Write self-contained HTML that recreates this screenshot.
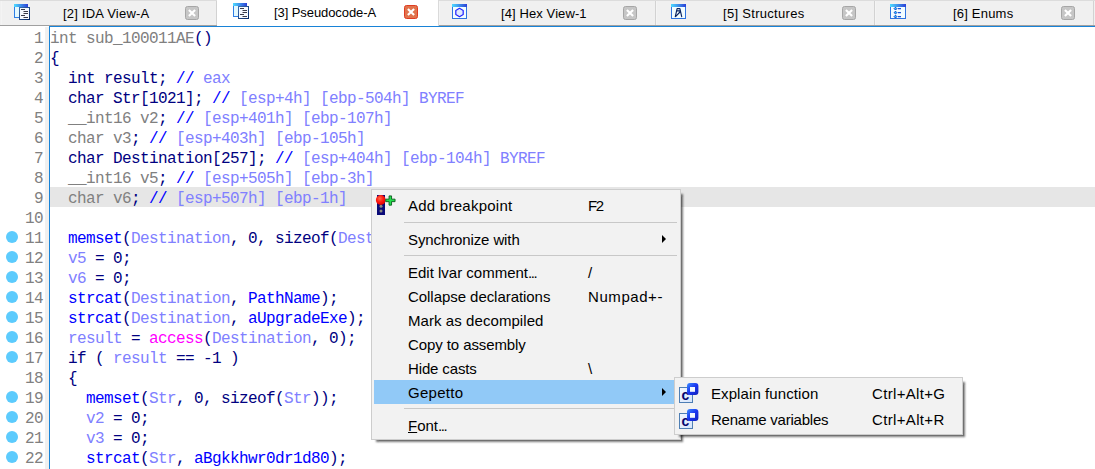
<!DOCTYPE html>
<html>
<head>
<meta charset="utf-8">
<title>IDA Pseudocode</title>
<style>
html,body{margin:0;padding:0;}
body{width:1095px;height:469px;overflow:hidden;background:#fff;position:relative;font-family:"Liberation Sans",sans-serif;}
#tabs{position:absolute;left:0;top:0;width:1095px;height:27px;background:#f0f0f0;}
#tabs .topline{position:absolute;left:0;top:0;width:1095px;height:1px;background:#dcdcdc;}
#tabs .grayline{position:absolute;left:0;top:25px;width:1095px;height:1px;background:#a0a0a0;}
#tabs .blueline{position:absolute;left:49px;top:26px;width:1046px;height:1px;background:#1883d7;}
#tabs .whiteline{position:absolute;left:0;top:26px;width:49px;height:1px;background:#fff;}
.tab{position:absolute;top:1px;height:24px;border-left:1px solid #f4f4f4;border-right:1px solid #d2d2d2;box-sizing:border-box;font-size:13px;color:#000;}
.tab.active{background:#fff;top:0;height:26px;border-left:1px solid #fff;border-right:1px solid #dadada;}
.tab .ico{position:absolute;top:3px;}
.tab .lbl{position:absolute;top:5px;white-space:nowrap;line-height:16px;letter-spacing:0.2px;}
.tab.active .lbl{top:5px;}
.tab .cls{position:absolute;top:5px;width:14px;height:14px;box-sizing:border-box;border:1px solid #a6a6a6;border-radius:2.5px;background:#c6c6c6;}
.tab.active .cls{background:#e1734c;border-color:#df3c22;}
#gutterstrip{position:absolute;left:45px;top:27px;width:4px;height:442px;background:#f0f0f0;}
#bluev{position:absolute;left:49px;top:26px;width:1px;height:443px;background:#1883d7;}
.ln{position:absolute;left:0;width:1095px;height:20px;font-family:"Liberation Mono",monospace;font-size:16px;letter-spacing:-0.6px;line-height:24px;white-space:pre;}
.ln.hl .code{background:#e6e6e6;}
.ln .num{position:absolute;left:0;width:43px;text-align:right;color:#808080;}
.ln .code{position:absolute;left:50px;right:0;height:20px;}
.ln .dot{position:absolute;left:6px;top:3.5px;width:12px;height:12px;border-radius:50%;background:#5ccbfd;}
.g{color:#808080}.n{color:#000080}.b{color:#0000ff}.p{color:#8080ff}.m{color:#ff00ff}
.menu{position:absolute;background:#f2f2f2;border:1px solid #cdcdcd;box-sizing:border-box;box-shadow:3.6px 3.6px 2px -1.2px rgba(0,0,0,0.56);font-size:15px;color:#000;}
.mi{position:absolute;left:2px;right:2px;height:24px;line-height:26px;white-space:nowrap;}
.dd{letter-spacing:-1.4px;}
.mi.sel{background:#91c9f7;}
.mi .t{position:absolute;left:34px;top:0;}
.mi .k{position:absolute;left:214px;top:0;}
.mi .arr{position:absolute;right:12px;top:8px;width:0;height:0;border-left:4px solid #000;border-top:4px solid transparent;border-bottom:4px solid transparent;}
.sep{position:absolute;left:32px;right:3px;height:1px;background:#c8c8c8;}
</style>
</head>
<body>
<div id="tabs">
  <div class="topline"></div>
  <div class="grayline"></div>
  <div class="whiteline"></div>
  <div class="blueline"></div>
  <div class="tab" style="left:1px;width:216px;"><svg class="ico" style="left:12px" width="17" height="17" viewBox="0 0 17 17"><defs><linearGradient id="tg1" x1="0" y1="0" x2="1" y2="0"><stop offset="0" stop-color="#4fdcff"/><stop offset="1" stop-color="#2b3fd6"/></linearGradient><linearGradient id="dg1" x1="0" y1="0" x2="1" y2="1"><stop offset="0" stop-color="#3b6cb0"/><stop offset="1" stop-color="#062a66"/></linearGradient></defs><rect x="0.5" y="0.5" width="13" height="13" fill="#e4f9ff" stroke="#2f7fe6"/><rect x="0" y="0" width="14" height="3" fill="url(#tg1)"/><rect x="5.5" y="3.5" width="10" height="12" fill="#f4f9ff" stroke="url(#dg1)"/><g stroke="#3a3a48" stroke-width="1"><path d="M7 5.5h4M9.5 7.5h4.5M9.5 9.5h4.5M7 11.5h4M9.5 13.5h4.5"/></g></svg><span class="lbl" style="left:61px">[2] IDA View-A</span><span class="cls" style="left:183px"><svg width="12" height="12" viewBox="0 0 12 12" style="position:absolute;left:0;top:0"><path d="M2.9 2.9L9.1 9.1M9.1 2.9L2.9 9.1" stroke="#fff" stroke-width="2.1" stroke-linecap="butt"/></svg></span></div>
  <div class="tab active" style="left:217px;width:222px;"><svg class="ico" style="left:15px" width="17" height="17" viewBox="0 0 17 17"><defs><linearGradient id="tg2" x1="0" y1="0" x2="1" y2="0"><stop offset="0" stop-color="#4fdcff"/><stop offset="1" stop-color="#2b3fd6"/></linearGradient><linearGradient id="dg2" x1="0" y1="0" x2="1" y2="1"><stop offset="0" stop-color="#3b6cb0"/><stop offset="1" stop-color="#062a66"/></linearGradient></defs><rect x="0.5" y="0.5" width="13" height="13" fill="#e4f9ff" stroke="#2f7fe6"/><rect x="0" y="0" width="14" height="3" fill="url(#tg2)"/><rect x="5.5" y="3.5" width="10" height="12" fill="#f4f9ff" stroke="url(#dg2)"/><g stroke="#3a3a48" stroke-width="1"><path d="M7 5.5h4M9.5 7.5h4.5M9.5 9.5h4.5M7 11.5h4M9.5 13.5h4.5"/></g></svg><span class="lbl" style="left:56px;letter-spacing:-0.08px">[3] Pseudocode-A</span><span class="cls" style="left:186px"><svg width="12" height="12" viewBox="0 0 12 12" style="position:absolute;left:0;top:0"><path d="M2.9 2.9L9.1 9.1M9.1 2.9L2.9 9.1" stroke="#fff" stroke-width="2.1" stroke-linecap="butt"/></svg></span></div>
  <div class="tab" style="left:439px;width:217px;"><svg class="ico" style="left:12px" width="15" height="15" viewBox="0 0 15 15"><defs><linearGradient id="tg3" x1="0" y1="0" x2="1" y2="0"><stop offset="0" stop-color="#4fdcff"/><stop offset="1" stop-color="#2b3fd6"/></linearGradient></defs><rect x="0.5" y="0.5" width="14" height="14" fill="#f2fdff" stroke="#2f74e0"/><rect x="0" y="0" width="15" height="3" fill="url(#tg3)"/><path d="M7.5 4.3L11.2 6.4V10.6L7.5 12.7L3.8 10.6V6.4Z" fill="#dfeaff" stroke="#2222ff" stroke-width="1.2" stroke-linejoin="round"/></svg><span class="lbl" style="left:61px;letter-spacing:0.1px">[4] Hex View-1</span><span class="cls" style="left:183px"><svg width="12" height="12" viewBox="0 0 12 12" style="position:absolute;left:0;top:0"><path d="M2.9 2.9L9.1 9.1M9.1 2.9L2.9 9.1" stroke="#fff" stroke-width="2.1" stroke-linecap="butt"/></svg></span></div>
  <div class="tab" style="left:656px;width:219px;"><svg class="ico" style="left:14px" width="15" height="15" viewBox="0 0 15 15"><defs><linearGradient id="tg4" x1="0" y1="0" x2="1" y2="0"><stop offset="0" stop-color="#4fdcff"/><stop offset="1" stop-color="#2b3fd6"/></linearGradient></defs><rect x="0.5" y="0.5" width="14" height="14" fill="#f2fdff" stroke="#2f74e0"/><rect x="0" y="0" width="15" height="3" fill="url(#tg4)"/><g fill="none" stroke="#0a2360" stroke-width="1.15" stroke-linecap="round"><path d="M6.2 4.6h2.6M6.1 4.6L4.3 12.7M8.9 4.6L10.7 12.7M5.7 6.9h3.6M9 8L4.8 12.4"/></g></svg><span class="lbl" style="left:66px;letter-spacing:0.3px">[5] Structures</span><span class="cls" style="left:185px"><svg width="12" height="12" viewBox="0 0 12 12" style="position:absolute;left:0;top:0"><path d="M2.9 2.9L9.1 9.1M9.1 2.9L2.9 9.1" stroke="#fff" stroke-width="2.1" stroke-linecap="butt"/></svg></span></div>
  <div class="tab" style="left:875px;width:219px;"><svg class="ico" style="left:14px" width="16" height="15" viewBox="0 0 16 15"><defs><linearGradient id="tg5" x1="0" y1="0" x2="1" y2="0"><stop offset="0" stop-color="#4fdcff"/><stop offset="1" stop-color="#2b3fd6"/></linearGradient></defs><rect x="0.5" y="0.5" width="15" height="14" fill="#f2fdff" stroke="#2f74e0"/><rect x="0" y="0" width="16" height="3" fill="url(#tg5)"/><g fill="#19d3ff" stroke="#1838c8" stroke-width="1"><path d="M5.5 3.2l1.4 1.4-1.4 1.4-1.4-1.4zM5.5 7.2l1.4 1.4-1.4 1.4-1.4-1.4zM5.5 11.2l1.4 1.4-1.4 1.4-1.4-1.4z"/></g><path d="M8 4.6h3M8 8.6h3M8 12.6h3" stroke="#1c4fd8" stroke-width="1.2"/></svg><span class="lbl" style="left:77px">[6] Enums</span><span class="cls" style="left:185px"><svg width="12" height="12" viewBox="0 0 12 12" style="position:absolute;left:0;top:0"><path d="M2.9 2.9L9.1 9.1M9.1 2.9L2.9 9.1" stroke="#fff" stroke-width="2.1" stroke-linecap="butt"/></svg></span></div>
</div>
<div id="gutterstrip"></div>
<div id="bluev"></div>
<div class="ln" style="top:27px"><span class="num">1</span><span class="code"><span class="g">int sub_100011AE</span><span class="n">()</span></span></div>
<div class="ln" style="top:47px"><span class="num">2</span><span class="code"><span class="n">{</span></span></div>
<div class="ln" style="top:67px"><span class="num">3</span><span class="code"><span class="n">  int result; </span><span class="b">// </span><span class="p">eax</span></span></div>
<div class="ln" style="top:87px"><span class="num">4</span><span class="code"><span class="n">  char Str[1021]; </span><span class="b">// </span><span class="p">[esp+4h] [ebp-504h] BYREF</span></span></div>
<div class="ln" style="top:107px"><span class="num">5</span><span class="code"><span class="g">  __int16 v2</span><span class="n">; </span><span class="b">// </span><span class="p">[esp+401h] [ebp-107h]</span></span></div>
<div class="ln" style="top:127px"><span class="num">6</span><span class="code"><span class="g">  char v3</span><span class="n">; </span><span class="b">// </span><span class="p">[esp+403h] [ebp-105h]</span></span></div>
<div class="ln" style="top:147px"><span class="num">7</span><span class="code"><span class="n">  char Destination[257]; </span><span class="b">// </span><span class="p">[esp+404h] [ebp-104h] BYREF</span></span></div>
<div class="ln" style="top:167px"><span class="num">8</span><span class="code"><span class="g">  __int16 v5</span><span class="n">; </span><span class="b">// </span><span class="p">[esp+505h] [ebp-3h]</span></span></div>
<div class="ln hl" style="top:187px"><span class="num">9</span><span class="code"><span class="g">  char v6</span><span class="n">; </span><span class="b">// </span><span class="p">[esp+507h] [ebp-1h]</span></span></div>
<div class="ln" style="top:207px"><span class="num">10</span><span class="code"></span></div>
<div class="ln" style="top:227px"><i class="dot"></i><span class="num">11</span><span class="code"><span class="b">  memset</span><span class="n">(</span><span class="p">Destination</span><span class="n">, 0, sizeof(</span><span class="p">Destination</span><span class="n">));</span></span></div>
<div class="ln" style="top:247px"><i class="dot"></i><span class="num">12</span><span class="code"><span class="p">  v5</span><span class="n"> = 0;</span></span></div>
<div class="ln" style="top:267px"><i class="dot"></i><span class="num">13</span><span class="code"><span class="p">  v6</span><span class="n"> = 0;</span></span></div>
<div class="ln" style="top:287px"><i class="dot"></i><span class="num">14</span><span class="code"><span class="b">  strcat</span><span class="n">(</span><span class="p">Destination</span><span class="n">, </span><span class="b">PathName</span><span class="n">);</span></span></div>
<div class="ln" style="top:307px"><i class="dot"></i><span class="num">15</span><span class="code"><span class="b">  strcat</span><span class="n">(</span><span class="p">Destination</span><span class="n">, </span><span class="b">aUpgradeExe</span><span class="n">);</span></span></div>
<div class="ln" style="top:327px"><i class="dot"></i><span class="num">16</span><span class="code"><span class="p">  result</span><span class="n"> = </span><span class="m">access</span><span class="n">(</span><span class="p">Destination</span><span class="n">, 0);</span></span></div>
<div class="ln" style="top:347px"><i class="dot"></i><span class="num">17</span><span class="code"><span class="n">  if ( </span><span class="p">result</span><span class="n"> == -1 )</span></span></div>
<div class="ln" style="top:367px"><span class="num">18</span><span class="code"><span class="n">  {</span></span></div>
<div class="ln" style="top:387px"><i class="dot"></i><span class="num">19</span><span class="code"><span class="b">    memset</span><span class="n">(</span><span class="p">Str</span><span class="n">, 0, sizeof(</span><span class="p">Str</span><span class="n">));</span></span></div>
<div class="ln" style="top:407px"><i class="dot"></i><span class="num">20</span><span class="code"><span class="p">    v2</span><span class="n"> = 0;</span></span></div>
<div class="ln" style="top:427px"><i class="dot"></i><span class="num">21</span><span class="code"><span class="p">    v3</span><span class="n"> = 0;</span></span></div>
<div class="ln" style="top:447px"><i class="dot"></i><span class="num">22</span><span class="code"><span class="b">    strcat</span><span class="n">(</span><span class="p">Str</span><span class="n">, </span><span class="b">aBgkkhwr0dr1d80</span><span class="n">);</span></span></div>
<div class="menu" id="m1" style="left:371px;top:189px;width:310px;height:251px;">
  <div class="mi" style="top:3px"><svg style="position:absolute;left:1px;top:2px" width="22" height="21" viewBox="0 0 22 21"><defs><radialGradient id="rb" cx="0.4" cy="0.35" r="0.7"><stop offset="0" stop-color="#ff6a4a"/><stop offset="0.5" stop-color="#ff1a10"/><stop offset="1" stop-color="#d80000"/></radialGradient></defs><rect x="2" y="0" width="8" height="20" fill="#0a0a78"/><circle cx="6" cy="11.3" r="1.5" fill="#8c8c80"/><circle cx="6" cy="16" r="1.5" fill="#8c8c80"/><ellipse cx="5.8" cy="5" rx="4.9" ry="4.9" fill="url(#rb)"/><path d="M14.05 0.9h2.5v3.25h3.5v2.5h-3.5v3.5h-2.5v-3.5h-3.3v-2.5h3.3z" fill="#22dd4c" stroke="#0a5c1c" stroke-width="0.9"/></svg><span class="t" style="letter-spacing:0.25px">Add breakpoint</span><span class="k" style="letter-spacing:-1.3px">F2</span></div>
  <div class="sep" style="top:32px"></div>
  <div class="mi" style="top:37px"><span class="t" style="letter-spacing:-0.11px">Synchronize with</span><i class="arr"></i></div>
  <div class="sep" style="top:65px"></div>
  <div class="mi" style="top:70px"><span class="t" style="letter-spacing:-0.00px">Edit lvar comment<span class="dd">...</span></span><span class="k">/</span></div>
  <div class="mi" style="top:94px"><span class="t" style="letter-spacing:-0.05px">Collapse declarations</span><span class="k" style="letter-spacing:0.57px">Numpad+-</span></div>
  <div class="mi" style="top:118px"><span class="t" style="letter-spacing:0.07px">Mark as decompiled</span></div>
  <div class="mi" style="top:142px"><span class="t" style="letter-spacing:-0.09px">Copy to assembly</span></div>
  <div class="mi" style="top:166px"><span class="t" style="letter-spacing:-0.13px">Hide casts</span><span class="k">\</span></div>
  <div class="mi sel" style="top:190px"><span class="t" style="letter-spacing:0.27px">Gepetto</span><i class="arr"></i></div>
  <div class="sep" style="top:218px"></div>
  <div class="mi" style="top:223px"><span class="t"><u>F</u>ont<span class="dd">...</span></span></div>
</div>
<div class="menu" id="m2" style="left:674px;top:377px;width:289px;height:58px;">
  <div class="mi" style="top:2px;height:26px;line-height:28px"><svg style="position:absolute;left:2px;top:3px" width="21" height="21" viewBox="0 0 21 21"><defs><linearGradient id="gq1" x1="0" y1="0" x2="1" y2="1"><stop offset="0" stop-color="#3b8cff"/><stop offset="0.5" stop-color="#1a35f0"/><stop offset="1" stop-color="#1020b8"/></linearGradient><linearGradient id="gd1" x1="0" y1="0" x2="1" y2="1"><stop offset="0" stop-color="#f4f8ff"/><stop offset="1" stop-color="#d4e4fb"/></linearGradient></defs><rect x="0.5" y="4.5" width="13" height="15" fill="url(#gd1)" stroke="#4f7fb4"/><text x="2.4" y="16.6" font-family="Liberation Sans, sans-serif" font-weight="bold" font-size="14" fill="#06066e">c</text><rect x="8" y="0" width="11.4" height="12" rx="3" fill="url(#gq1)"/><rect x="11" y="4" width="5" height="4.8" fill="#f2f8ff"/></svg><span class="t" style="letter-spacing:0.09px">Explain function</span><span class="k" style="left:195px;letter-spacing:0.33px">Ctrl+Alt+G</span></div>
  <div class="mi" style="top:28px;height:26px;line-height:28px"><svg style="position:absolute;left:2px;top:3px" width="21" height="21" viewBox="0 0 21 21"><defs><linearGradient id="gq2" x1="0" y1="0" x2="1" y2="1"><stop offset="0" stop-color="#3b8cff"/><stop offset="0.5" stop-color="#1a35f0"/><stop offset="1" stop-color="#1020b8"/></linearGradient><linearGradient id="gd2" x1="0" y1="0" x2="1" y2="1"><stop offset="0" stop-color="#f4f8ff"/><stop offset="1" stop-color="#d4e4fb"/></linearGradient></defs><rect x="0.5" y="4.5" width="13" height="15" fill="url(#gd2)" stroke="#4f7fb4"/><text x="2.4" y="16.6" font-family="Liberation Sans, sans-serif" font-weight="bold" font-size="14" fill="#06066e">c</text><rect x="8" y="0" width="11.4" height="12" rx="3" fill="url(#gq2)"/><rect x="11" y="4" width="5" height="4.8" fill="#f2f8ff"/></svg><span class="t" style="letter-spacing:-0.22px">Rename variables</span><span class="k" style="left:195px;letter-spacing:0.34px">Ctrl+Alt+R</span></div>
</div>
</body>
</html>
